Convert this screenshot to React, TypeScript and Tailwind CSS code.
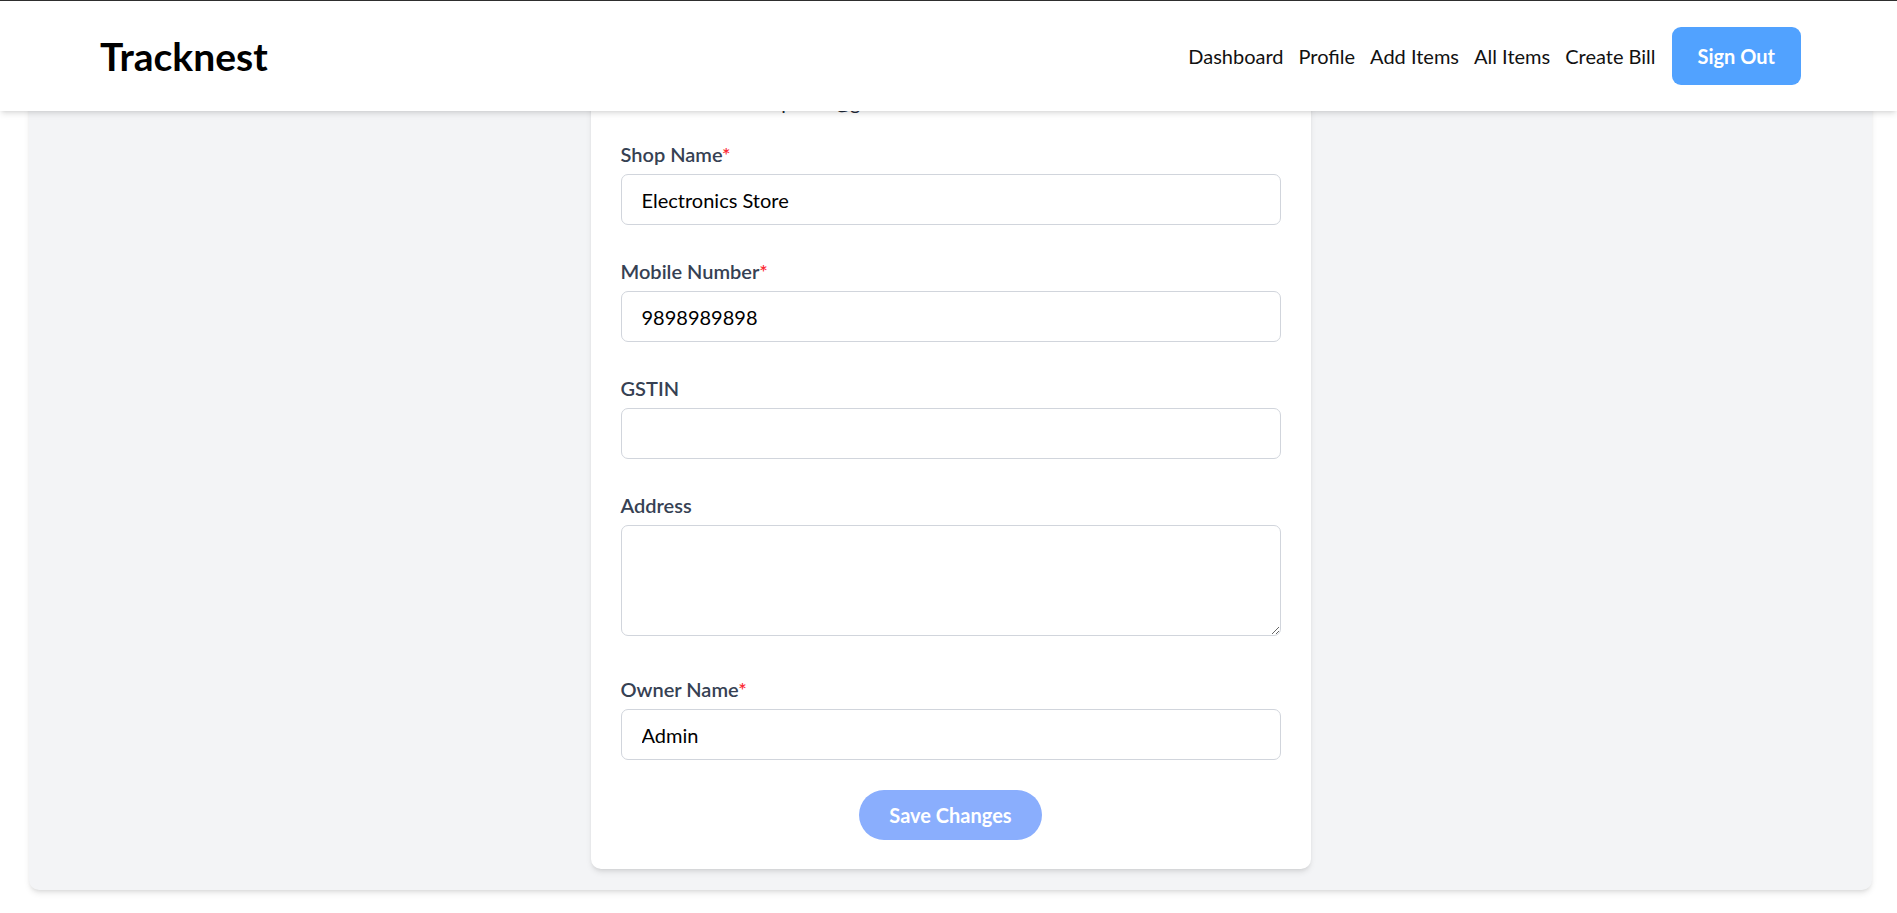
import React from "react";

function Label({ text, required }: { text: string; required?: boolean }) {
  return (
    <label className="block text-[20px] leading-[30px] font-semibold text-[#364153] mb-[5px]">
      {text}
      {required && <span className="text-[#fb2c36]">*</span>}
    </label>
  );
}

function InputField({ label, required, value }: { label: string; required?: boolean; value: string }) {
  return (
    <div>
      <Label text={label} required={required} />
      <input
        type="text"
        defaultValue={value}
        className="block w-full h-[51px] border border-[#d1d5dc] rounded-[7px] px-[20px] text-[20px] text-black bg-white outline-none"
      />
    </div>
  );
}

export default function App() {
  const navItems = ["Dashboard", "Profile", "Add Items", "All Items", "Create Bill"];
  return (
    <div className="relative h-screen overflow-hidden flex flex-col justify-end bg-white font-['Segoe_UI',Lato,sans-serif]">
      <header className="absolute top-0 left-0 right-0 z-10 h-[111px] bg-white border-t border-[#2e2e2e] shadow-md flex items-center justify-between pl-[100px] pr-[96px]">
        <div className="text-[39px] font-bold text-black leading-none">Tracknest</div>
        <nav className="flex items-center gap-[15px]">
          {navItems.map((n) => (
            <a key={n} className="text-[20px] text-[#111] cursor-pointer">
              {n}
            </a>
          ))}
          <button className="ml-[1px] bg-[#51a2ff] text-white font-bold text-[20px] leading-[28px] px-[26px] py-[15px] rounded-[9px]">
            Sign Out
          </button>
        </nav>
      </header>

      <main className="shrink-0 ml-[29px] mr-[25px] mb-[23px] bg-[#f3f4f6] rounded-[10px] shadow-md pt-[30px] pb-[21px] flex justify-center">
        <div className="w-[720px] bg-white rounded-[10px] shadow-md px-[30px] pt-[30px] pb-[29px]">
          <h2 className="text-[30px] font-bold text-[#1e2939] text-center mb-[20px]">Profile</h2>
          <p className="text-[20px] leading-[30px] text-[#1e2939] mb-[22px]">
            Email address: shopmart@gmail.com
          </p>
          <form className="flex flex-col gap-[31px]" onSubmit={(e) => e.preventDefault()}>
            <InputField label="Shop Name" required value="Electronics Store" />
            <InputField label="Mobile Number" required value="9898989898" />
            <InputField label="GSTIN" value="" />
            <div className="mb-[7px]">
              <Label text="Address" />
              <textarea
                rows={3}
                className="block w-full h-[111px] border border-[#d1d5dc] rounded-[7px] px-[20px] py-[10px] text-[20px] text-black bg-white outline-none"
              />
            </div>
            <InputField label="Owner Name" required value="Admin" />
            <div className="flex justify-center -mt-[1px]">
              <button
                type="submit"
                className="bg-[#8aaefd] text-white font-bold text-[20px] leading-[30px] px-[30px] py-[10px] rounded-full"
              >
                Save Changes
              </button>
            </div>
          </form>
        </div>
      </main>
    </div>
  );
}
